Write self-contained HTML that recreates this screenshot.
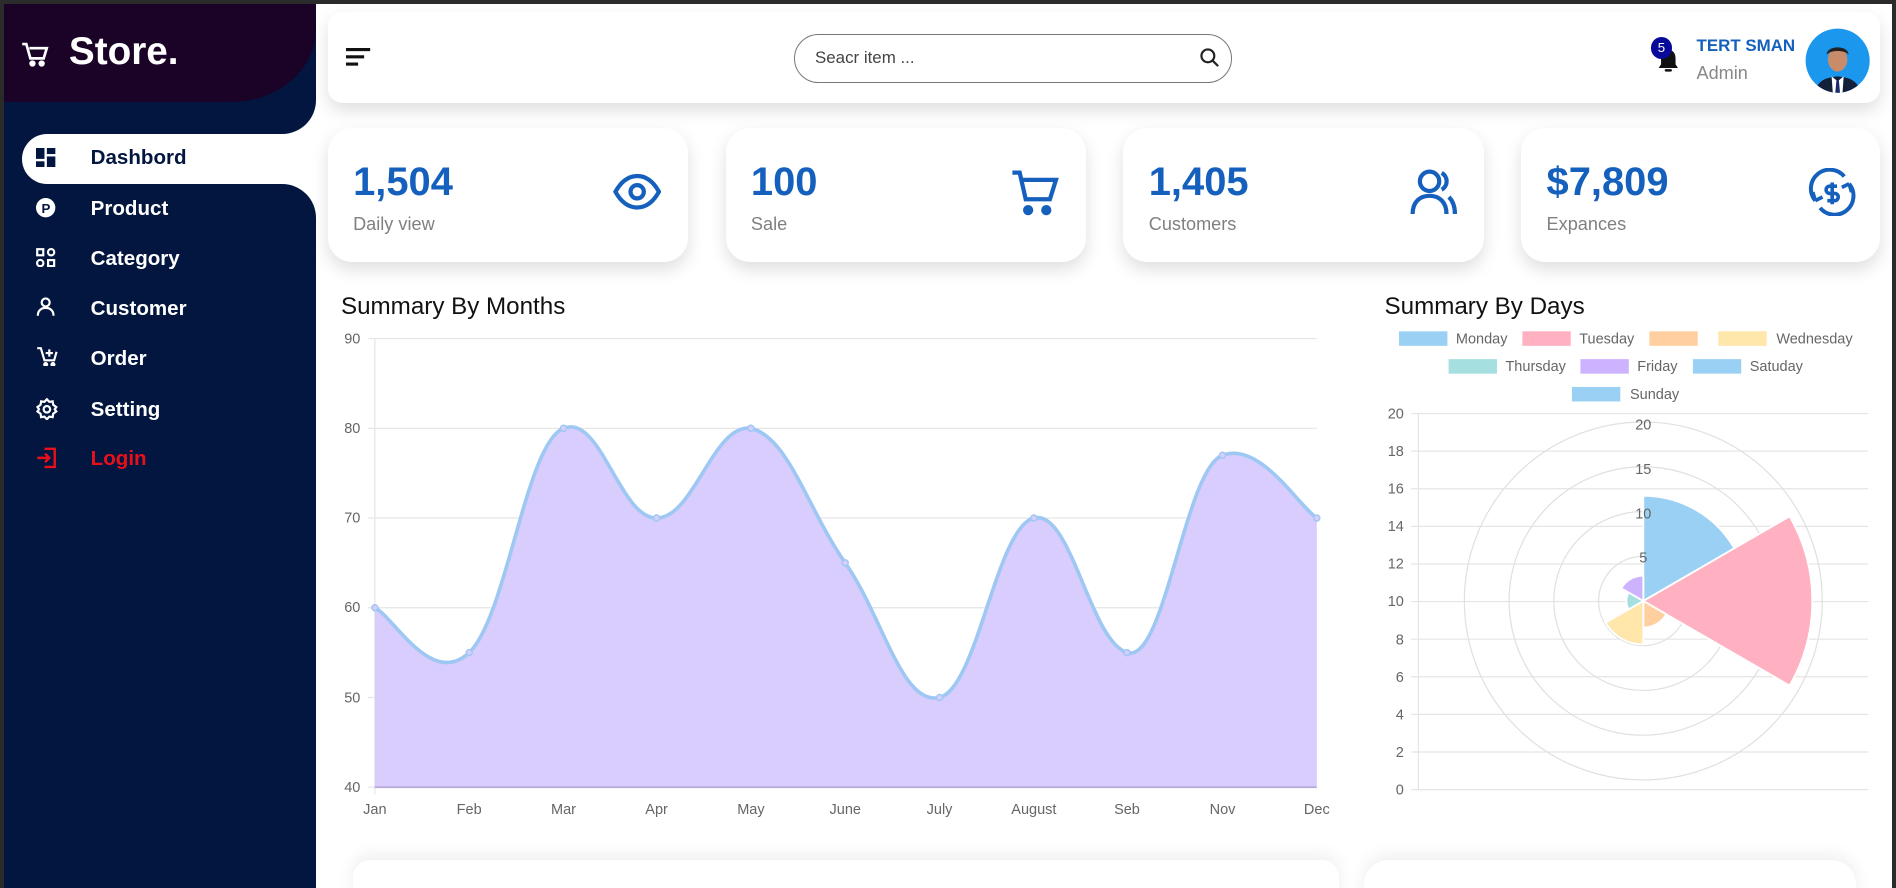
<!DOCTYPE html>
<html><head><meta charset="utf-8"><style>
*{margin:0;padding:0;box-sizing:border-box}
html,body{width:1896px;height:888px;overflow:hidden;background:#2b2b2b}
#w{zoom:1.2092;width:1568px;height:734px;position:relative;background:#2b2b2b;font-family:"Liberation Sans",sans-serif}
#main{position:absolute;left:3px;top:3px;width:1562px;height:731px;background:#fff;overflow:hidden}
.sb{position:absolute;left:0;width:258px}
.nav{position:absolute;left:72px;color:#fff;font-weight:bold;font-size:17px}
.ic{position:absolute;left:27px}
.card{position:absolute;background:#fff;border-radius:20px;box-shadow:0 6px 14px rgba(0,0,0,.13)}
.num{position:absolute;left:21px;top:26px;font-size:33px;font-weight:bold;color:#1560bd}
.lbl{position:absolute;left:21px;top:71px;font-size:15px;color:#808080}
.h{position:absolute;font-size:20px;color:#111}
.ax{font-size:12px;fill:#666;font-family:"Liberation Sans",sans-serif}
</style></head><body><div id="w"><div id="main">
<div class="sb" style="top:0;height:731px;background:#fff"></div>
<div class="sb" style="top:0;height:108px;background:#021640;border-bottom-right-radius:28px"></div>
<div class="sb" style="top:0;height:81px;background:#1a0326;border-bottom-right-radius:70px 60px"></div>
<div class="sb" style="top:108px;height:41px;background:#021640"><div style="position:absolute;left:15px;right:0;top:0;bottom:0;background:#fff;border-radius:21px 0 0 21px"></div></div>
<div class="sb" style="top:149px;height:582px;background:#021640;border-top-right-radius:28px"></div>
<svg style="position:absolute;left:14px;top:31px" width="24" height="22" viewBox="0 0 28 26" fill="none" stroke="#fff" stroke-width="2.6"><path d="M1 3h4l4 14h13l3-10H8"/><circle cx="11" cy="22" r="1.8" fill="#fff"/><circle cx="20" cy="22" r="1.8" fill="#fff"/></svg>
<div style="position:absolute;left:54px;top:22px;color:#fff;font-weight:bold;font-size:32px">Store.</div>
<svg class="ic" style="top:119px" width="16" height="16"><rect x="0" y="0" width="7" height="9" fill="#021640"/><rect x="9" y="0" width="7" height="5" fill="#021640"/><rect x="0" y="11" width="7" height="5" fill="#021640"/><rect x="9" y="7" width="7" height="9" fill="#021640"/></svg>
<div class="nav" style="top:118px;color:#021640">Dashbord</div>
<svg class="ic" style="top:161px" width="16" height="16"><circle cx="8" cy="8" r="8" fill="#fff"/><text x="4.5" y="12.5" font-size="11" font-weight="bold" fill="#021640" font-family="Liberation Sans">P</text></svg>
<div class="nav" style="top:160px">Product</div>
<svg class="ic" style="top:202px" width="16" height="16" fill="none" stroke="#fff" stroke-width="1.8"><rect x="1" y="1" width="5" height="5"/><circle cx="12.5" cy="3.5" r="2.6"/><circle cx="3.5" cy="12.5" r="2.6"/><rect x="10" y="10" width="5" height="5"/></svg>
<div class="nav" style="top:201px">Category</div>
<svg class="ic" style="top:243px" width="16" height="16" fill="none" stroke="#fff" stroke-width="1.8"><circle cx="8" cy="4.5" r="3.3"/><path d="M1.5 15.5c0-4.5 3-6.5 6.5-6.5s6.5 2 6.5 6.5"/></svg>
<div class="nav" style="top:243px">Customer</div>
<svg class="ic" style="top:284px" width="18" height="16" fill="none" stroke="#fff" stroke-width="1.8"><path d="M1 1h3l3 10h8l2-7"/><path d="M11 2v6M8 5h6"/><circle cx="8" cy="14.5" r="1.2" fill="#fff"/><circle cx="14" cy="14.5" r="1.2" fill="#fff"/></svg>
<div class="nav" style="top:284px">Order</div>
<svg class="ic" style="top:326px" width="18" height="18" fill="none" stroke="#fff" stroke-width="1.8"><path d="M9 1l2 2.2 2.8-.4.4 2.8L16.8 7.5 15.5 9.3l1.3 1.8-2.6 1.9-.4 2.8-2.8-.4L9 17.6l-2-2.2-2.8.4-.4-2.8L1.2 11.1 2.5 9.3 1.2 7.5l2.6-1.9.4-2.8 2.8.4z"/><circle cx="9" cy="9.3" r="2.7"/></svg>
<div class="nav" style="top:326px">Setting</div>
<svg class="ic" style="top:367px" width="18" height="18" fill="none" stroke="#e8101a" stroke-width="2"><path d="M7 1.5h8.5v15H7"/><path d="M1 9h10M7.5 5.5 11 9l-3.5 3.5"/></svg>
<div class="nav" style="top:367px;color:#e8101a">Login</div>

<div class="card" style="left:268px;top:7px;width:1284px;height:75px;border-radius:12px"></div>
<svg style="position:absolute;left:283px;top:37px" width="22" height="16"><rect x="0" y="0" width="20" height="2.6" fill="#111"/><rect x="0" y="6" width="15" height="2.6" fill="#111"/><rect x="0" y="12" width="10" height="2.6" fill="#111"/></svg>
<div style="position:absolute;left:654px;top:25px;width:362px;height:41px;border:1px solid #777;border-radius:21px"></div>
<div style="position:absolute;left:671px;top:37px;font-size:14px;color:#444">Seacr item ...</div>
<svg style="position:absolute;left:989px;top:37px" width="16" height="16" fill="none" stroke="#222" stroke-width="1.8"><circle cx="6.5" cy="6.5" r="5.3"/><path d="M10.5 10.5l4.5 4.5"/></svg>
<svg style="position:absolute;left:1366px;top:34px" width="22" height="24"><path d="M11 4c-4 0-6 3-6 7v5l-2 3h16l-2-3v-5c0-4-2-7-6-7z" fill="#111"/><rect x="8" y="20" width="6" height="2" rx="1" fill="#111"/></svg>
<div style="position:absolute;left:1362px;top:28px;width:18px;height:18px;border-radius:50%;background:#0a0a9a;color:#fff;font-size:11px;text-align:center;line-height:18px">5</div>
<div style="position:absolute;left:1400px;top:27px;font-size:14px;font-weight:bold;color:#1560bd">TERT SMAN</div>
<div style="position:absolute;left:1400px;top:49px;font-size:15px;color:#888">Admin</div>
<svg style="position:absolute;left:1490px;top:20px" width="54" height="54"><defs><clipPath id="c"><circle cx="27" cy="27" r="26.5"/></clipPath></defs><g clip-path="url(#c)"><rect width="54" height="54" fill="#1b97ee"/><path d="M8 54c2-10 8-13 19-14 11 1 17 4 19 14z" fill="#12203a"/><path d="M22 40l5 4 5-4 -1 14h-8z" fill="#fff"/><path d="M26 43h2l1 11h-4z" fill="#1a2a6a"/><ellipse cx="27" cy="26" rx="8" ry="10" fill="#c98c6a"/><path d="M18 22c0-8 18-8 18 0-3-4-15-4-18 0z" fill="#222"/></g></svg>

<div class="card" style="left:268px;top:103px;width:298px;height:111px"><div class="num">1,504</div><div class="lbl">Daily view</div>
<svg style="position:absolute;left:236px;top:35px" width="40" height="36" fill="none" stroke="#1560bd" stroke-width="3.5"><path d="M2 18c5-9 11-13 18-13s13 4 18 13c-5 9-11 13-18 13S7 27 2 18z"/><circle cx="20" cy="18" r="5.5"/></svg></div>
<div class="card" style="left:597px;top:103px;width:298px;height:111px"><div class="num">100</div><div class="lbl">Sale</div>
<svg style="position:absolute;left:235px;top:34px" width="42" height="40" fill="none" stroke="#1560bd" stroke-width="3.5"><path d="M2 3h6l5 22h20l5-16H10"/><circle cx="15" cy="34" r="2.5" fill="#1560bd"/><circle cx="30" cy="34" r="2.5" fill="#1560bd"/></svg></div>
<div class="card" style="left:926px;top:103px;width:298px;height:111px"><div class="num">1,405</div><div class="lbl">Customers</div>
<svg style="position:absolute;left:236px;top:33px" width="40" height="40" fill="none" stroke="#1560bd" stroke-width="3.5"><circle cx="17" cy="11" r="8"/><path d="M3 38c0-10 6-15 14-15s14 5 14 15"/><path d="M27 4a8 8 0 0 1 0 14M33 24c3 3 5 8 5 14"/></svg></div>
<div class="card" style="left:1255px;top:103px;width:297px;height:111px"><div class="num">$7,809</div><div class="lbl">Expances</div>
<svg style="position:absolute;left:237px;top:33px" width="40" height="40" fill="none" stroke="#1560bd" stroke-width="3.3"><path d="M30 7A15 15 0 0 0 6 27"/><path d="M10 33A15 15 0 0 0 34 13"/><path d="M6 27l-2-7M6 27l6-3M34 13l2 7M34 13l-6 3" stroke-width="3"/><path d="M24 15h-6a3 3 0 0 0 0 6h4a3 3 0 0 1 0 6h-6M20 12v18" stroke-width="3"/></svg></div>

<div class="h" style="left:279px;top:239px">Summary By Months</div>
<div class="h" style="left:1142px;top:239px">Summary By Days</div>

<svg style="position:absolute;left:-3px;top:-3px" width="1568" height="734">
<g stroke="#e5e5e5" stroke-width="1">
<line x1="304" y1="280" x2="1089" y2="280"/><line x1="304" y1="354.2" x2="1089" y2="354.2"/><line x1="304" y1="428.4" x2="1089" y2="428.4"/><line x1="304" y1="502.6" x2="1089" y2="502.6"/><line x1="304" y1="576.8" x2="1089" y2="576.8"/><line x1="304" y1="651" x2="1089" y2="651"/>
<line x1="310" y1="280" x2="310" y2="657"/>
</g>
<g class="ax" text-anchor="end"><text x="298" y="284">90</text><text x="298" y="358">80</text><text x="298" y="432">70</text><text x="298" y="506">60</text><text x="298" y="581">50</text><text x="298" y="655">40</text></g>
<g class="ax" text-anchor="middle"><text x="310" y="673">Jan</text><text x="388" y="673">Feb</text><text x="466" y="673">Mar</text><text x="543" y="673">Apr</text><text x="621" y="673">May</text><text x="699" y="673">June</text><text x="777" y="673">July</text><text x="855" y="673">August</text><text x="932" y="673">Seb</text><text x="1011" y="673">Nov</text><text x="1089" y="673">Dec</text></g>
<path d="M310,502.6 C325.6,510 356.8,569.4 388,539.7 C419.2,510 435,366 466,354.2 C497,342 512,428.4 543,428.4 C574,428.4 589.8,350 621,354.2 C652.2,361.6 667.8,421 699,465.5 C730.2,510 745.8,584.2 777,576.8 C808.2,569.4 824,435.8 855,428.4 C886,421 900.8,529.3 932,539.7 C963.2,550.1 979.6,388 1011,376.5 C1042.4,365 1073.4,418 1089,428.4 L1089,651 L310,651Z" fill="#d8cdfc"/>
<path d="M310,502.6 C325.6,510 356.8,569.4 388,539.7 C419.2,510 435,366 466,354.2 C497,342 512,428.4 543,428.4 C574,428.4 589.8,350 621,354.2 C652.2,361.6 667.8,421 699,465.5 C730.2,510 745.8,584.2 777,576.8 C808.2,569.4 824,435.8 855,428.4 C886,421 900.8,529.3 932,539.7 C963.2,550.1 979.6,388 1011,376.5 C1042.4,365 1073.4,418 1089,428.4" fill="none" stroke="#9ec8f3" stroke-width="3"/>
<line x1="310" y1="651" x2="1089" y2="651" stroke="#b9acd9" stroke-width="1.5"/>
<g fill="#d8cdfc" stroke="#9ec8f3" stroke-width="1.2"><circle cx="310" cy="502.6" r="2.5"/><circle cx="388" cy="539.7" r="2.5"/><circle cx="466" cy="354.2" r="2.5"/><circle cx="543" cy="428.4" r="2.5"/><circle cx="621" cy="354.2" r="2.5"/><circle cx="699" cy="465.5" r="2.5"/><circle cx="777" cy="576.8" r="2.5"/><circle cx="855" cy="428.4" r="2.5"/><circle cx="932" cy="539.7" r="2.5"/><circle cx="1011" cy="376.5" r="2.5"/><circle cx="1089" cy="428.4" r="2.5"/></g>

<g class="ax" font-size="12">
<rect x="1157" y="274" width="40" height="12" fill="#9bd0f5"/><text x="1204" y="284">Monday</text>
<rect x="1259" y="274" width="40" height="12" fill="#ffb1c1"/><text x="1306" y="284">Tuesday</text>
<rect x="1364" y="274" width="40" height="12" fill="#ffcf9f"/>
<rect x="1421" y="274" width="40" height="12" fill="#ffe6aa"/><text x="1469" y="284">Wednesday</text>
<rect x="1198" y="297" width="40" height="12" fill="#a5dfdf"/><text x="1245" y="307">Thursday</text>
<rect x="1307" y="297" width="40" height="12" fill="#ccb2ff"/><text x="1354" y="307">Friday</text>
<rect x="1400" y="297" width="40" height="12" fill="#9bd0f5"/><text x="1447" y="307">Satuday</text>
<rect x="1300" y="320" width="40" height="12" fill="#9bd0f5"/><text x="1348" y="330">Sunday</text>
</g>
<g stroke="#e5e5e5"><line x1="1167" y1="342" x2="1545" y2="342"/><line x1="1167" y1="373.1" x2="1545" y2="373.1"/><line x1="1167" y1="404.2" x2="1545" y2="404.2"/><line x1="1167" y1="435.3" x2="1545" y2="435.3"/><line x1="1167" y1="466.4" x2="1545" y2="466.4"/><line x1="1167" y1="497.5" x2="1545" y2="497.5"/><line x1="1167" y1="528.6" x2="1545" y2="528.6"/><line x1="1167" y1="559.7" x2="1545" y2="559.7"/><line x1="1167" y1="590.8" x2="1545" y2="590.8"/><line x1="1167" y1="621.9" x2="1545" y2="621.9"/><line x1="1167" y1="653" x2="1545" y2="653"/><line x1="1173" y1="342" x2="1173" y2="653"/></g>
<g class="ax" text-anchor="end"><text x="1161" y="346">20</text><text x="1161" y="377">18</text><text x="1161" y="408">16</text><text x="1161" y="439">14</text><text x="1161" y="470">12</text><text x="1161" y="501">10</text><text x="1161" y="533">8</text><text x="1161" y="564">6</text><text x="1161" y="595">4</text><text x="1161" y="626">2</text><text x="1161" y="657">0</text></g>
<g fill="none" stroke="#e0e0e0"><circle cx="1359" cy="497" r="37"/><circle cx="1359" cy="497" r="74"/><circle cx="1359" cy="497" r="111"/><circle cx="1359" cy="497" r="148"/></g>
<g stroke="#fff" stroke-width="1.5">
<path d="M1359,497 L1359,410 A87,87 0 0 1 1434.3,453.5Z" fill="#9bd0f5"/>
<path d="M1359,497 L1480,427 A140,140 0 0 1 1480,567Z" fill="#ffb1c1"/>
<path d="M1359,497 L1378,508 A22,22 0 0 1 1359,519Z" fill="#ffcf9f"/>
<path d="M1359,497 L1359,533 A36,36 0 0 1 1327.8,515Z" fill="#ffe6aa"/>
<path d="M1359,497 L1346.9,504 A14,14 0 0 1 1346.9,490Z" fill="#a5dfdf"/>
<path d="M1359,497 L1340.8,486.5 A21,21 0 0 1 1359,476Z" fill="#ccb2ff"/>
</g>
<g class="ax" text-anchor="middle" font-size="13"><text x="1359" y="355">20</text><text x="1359" y="392">15</text><text x="1359" y="429">10</text><text x="1359" y="465">5</text></g>
</svg>

<div class="card" style="left:289px;top:708px;width:815px;height:60px;border-radius:14px;box-shadow:0 -4px 14px rgba(0,0,0,.07)"></div>
<div class="card" style="left:1125px;top:708px;width:407px;height:60px;border-radius:20px;box-shadow:0 -4px 14px rgba(0,0,0,.07)"></div>
</div></div></body></html>
